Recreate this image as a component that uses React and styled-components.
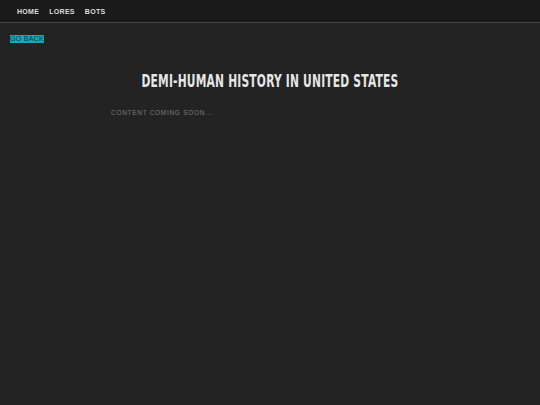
import styled, { createGlobalStyle } from "styled-components";

const Global = createGlobalStyle`
    html, body {
        margin: 0;
        padding: 0;
        background: #232323;
        min-height: 100%;
    }
    body {
        font-family: "Liberation Sans", Arial, sans-serif;
    }
`
const Page = styled.div`
    min-height: 405px;
    background: #232323;
`
const Nav = styled.nav`
    display: flex;
    align-items: center;
    gap: 10px;
    height: 23px;
    padding: 0 17px;
    background: #1a1a1a;
    border-bottom: 1px solid #454545;
    box-sizing: border-box;
`
const NavLink = styled.a`
    font-size: 7px;
    font-weight: bold;
    letter-spacing: 0.3px;
    color: #dcdcdc;
    text-decoration: none;
    cursor: pointer;
`
const Main = styled.main`
    padding: 12px 10px;
`
const BackLink = styled.a`
    display: block;
    width: fit-content;
    font-size: 7px;
    line-height: 8px;
    letter-spacing: 0.3px;
    color: #0b3b44;
    background: #19a5bb;
    text-decoration: none;
    cursor: pointer;
`
const Content = styled.section`
    width: 318px;
    margin: 0 auto;
`
const Title = styled.h1`
    margin: 28px -60px 0;
    text-align: center;
    white-space: nowrap;
    font-family: "Liberation Sans Narrow", "DejaVu Sans", sans-serif;
    font-weight: bold;
    font-size: 17px;
    line-height: 20px;
    letter-spacing: 0.3px;
    color: #e6e6e6;
`
const Squeeze = styled.span`
    display: inline-block;
    transform: scaleX(0.63);
`
const Note = styled.p`
    margin: 18px 0 0;
    font-size: 6.5px;
    letter-spacing: 0.7px;
    color: #7a7a7a;
`

function App() {
    return (<Page>
        <Global />
        <Nav>
            <NavLink>HOME</NavLink>
            <NavLink>LORES</NavLink>
            <NavLink>BOTS</NavLink>
        </Nav>
        <Main>
            <BackLink>GO BACK</BackLink>
            <Content>
                <Title><Squeeze>DEMI-HUMAN HISTORY IN UNITED STATES</Squeeze></Title>
                <Note>CONTENT COMING SOON...</Note>
            </Content>
        </Main>
    </Page>)
}

export default App
